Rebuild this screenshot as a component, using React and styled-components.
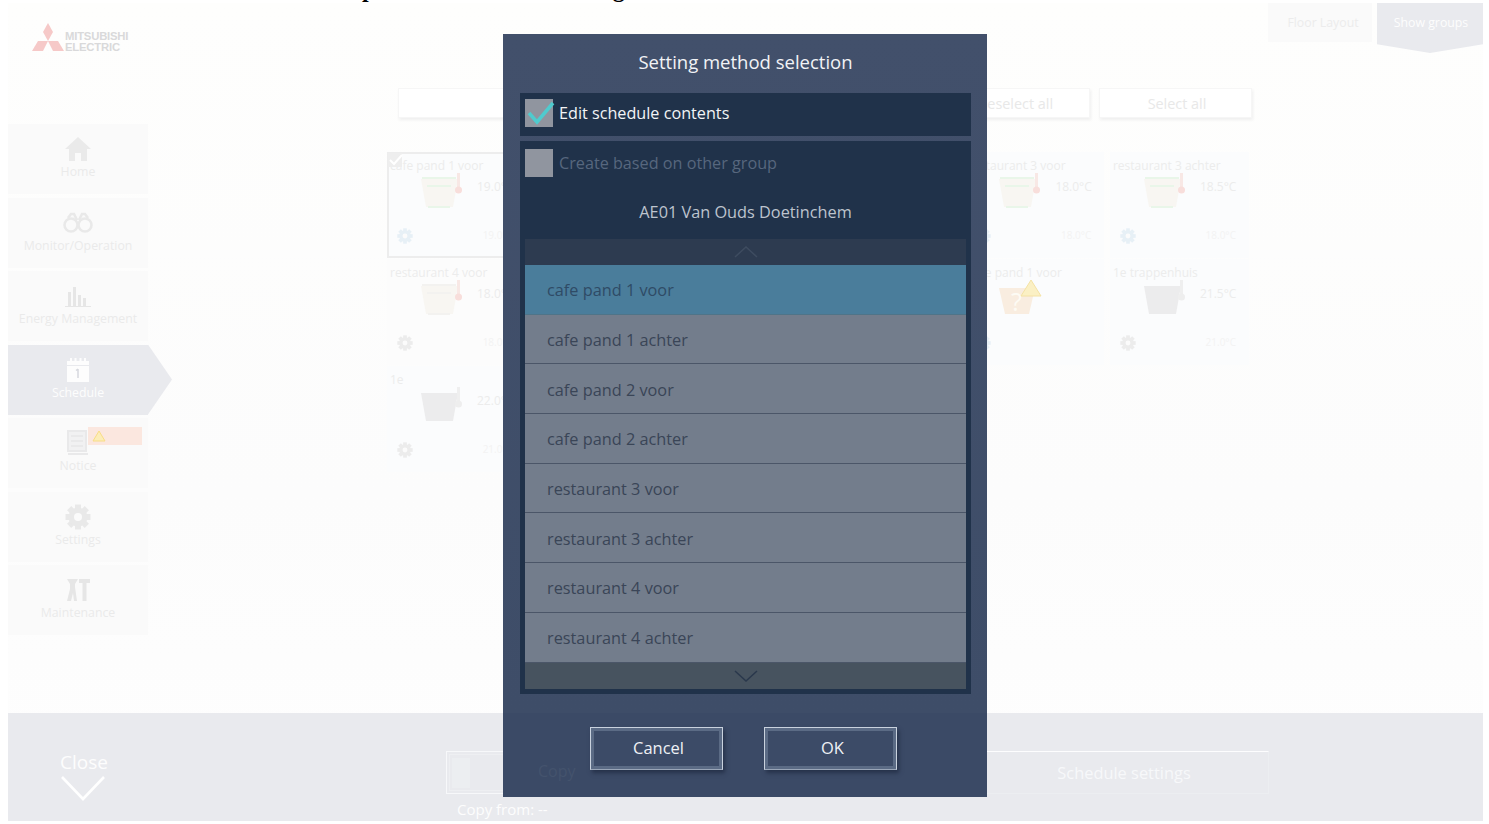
import React from "react";
import styled, { createGlobalStyle } from "styled-components";

const Global = createGlobalStyle`
  html, body { margin: 0; padding: 0; background: #fff; }
  body { font-family: "Open Sans", "Liberation Sans", sans-serif; overflow: hidden; }
`;

const Screen = styled.div`
  position: relative;
  width: 1489px;
  height: 824px;
  overflow: hidden;
  background: #fff;
`;
const Heading = styled.h2`
  margin: -25px 0 0 302px;
  height: 28px;
  font: bold 24px/28px "Liberation Serif", serif;
  color: #000;
  white-space: nowrap;
`;
const Frame = styled.div`
  display: flex;
  flex-direction: column;
  width: 1475px;
  height: 818px;
  margin-left: 8px;
  background: linear-gradient(#fefefd, #fcfcfc 60%, #fefefe);
`;
const Header = styled.header`
  display: flex;
  justify-content: space-between;
  height: 85px;
  flex: none;
`;
const Logo = styled.div`
  display: flex;
  align-items: flex-start;
  gap: 1px;
  padding: 20px 0 0 24px;
`;
const LogoText = styled.div`
  font: bold 11.3px/10.5px "Liberation Sans", sans-serif;
  color: #d9d9da;
  padding-top: 8px;
  letter-spacing: -0.2px;
`;
const Tabs = styled.div`
  display: flex;
  gap: 5px;
`;
const Tab = styled.div`
  position: relative;
  width: ${(p) => (p.$active ? "106px" : "104px")};
  height: 39px;
  display: flex;
  align-items: center;
  justify-content: center;
  box-sizing: border-box;
  padding-left: ${(p) => (p.$active ? "2px" : "6px")};
  font-size: 12.3px;
  color: ${(p) => (p.$active ? "#fdfdfd" : "#ececec")};
  background: ${(p) => (p.$active ? "#e9eaee" : "#fafafa")};
  ${(p) =>
    p.$active &&
    `&::after {
      content: "";
      position: absolute;
      left: 0; right: 0; top: 39px;
      height: 11px;
      background: #e9eaee;
      clip-path: polygon(0 0, 100% 0, 100% 20%, 50% 100%, 0 20%);
    }`}
`;
const Body = styled.div`
  flex: 1;
  display: flex;
  min-height: 0;
`;
const Sidebar = styled.nav`
  width: 164px;
  flex: none;
  display: flex;
  flex-direction: column;
  gap: 3.5px;
  padding-top: 36px;
`;
const NavItem = styled.div`
  position: relative;
  width: 140px;
  height: 70px;
  display: flex;
  flex-direction: column;
  align-items: center;
  justify-content: flex-start;
  padding-top: 10px;
  box-sizing: border-box;
  font-size: 12.3px;
  line-height: 16px;
  color: ${(p) => (p.$active ? "#fdfdfd" : "#eaeaea")};
  background: ${(p) => (p.$active ? "#e9eaee" : "#fafafa")};
  ${(p) =>
    p.$active &&
    `&::after {
      content: "";
      position: absolute;
      left: 140px; top: 0;
      width: 24px; height: 70px;
      background: #e9eaee;
      clip-path: polygon(0 0, 100% 50%, 0 100%);
    }`}
`;
const NavIcon = styled.span`
  height: 30px;
  display: flex;
  align-items: center;
`;
const NavBadge = styled.div`
  position: absolute;
  left: 80px;
  top: 9px;
  width: 54px;
  height: 18px;
  display: flex;
  align-items: center;
  padding-left: 4px;
  box-sizing: border-box;
  background: #fbe7df;
`;
const Main = styled.main`
  flex: 1;
  min-width: 0;
  padding-left: 215px;
`;
const Toolbar = styled.div`
  display: flex;
  justify-content: flex-end;
  gap: 9px;
  width: 854px;
  margin-left: 11px;
  height: 30px;
`;
const ToolButton = styled.div`
  flex: ${(p) => (p.$wide ? "1" : "none")};
  width: ${(p) => (p.$wide ? "auto" : "153px")};
  height: 30px;
  display: flex;
  align-items: center;
  justify-content: center;
  padding-left: 3px;
  font-size: 14.4px;
  color: #e8e8e8;
  background: #fff;
  border: 1px solid #f6f6f6;
  box-sizing: border-box;
  box-shadow: 1px 2px 3px #efefef;
`;
const Grid = styled.div`
  display: grid;
  grid-template-columns: repeat(6, 139px);
  column-gap: 5.6px;
  grid-auto-rows: 107px;
  margin-top: 34px;
`;
const Card = styled.div`
  position: relative;
  display: flex;
  flex-direction: column;
  box-sizing: border-box;
  padding: 4px 3px 0 1px;
  font-size: 12px;
  line-height: 15px;
  color: #ececec;
  background: ${(p) => (p.$plain ? "#fcfcfc" : "#fbfcfd")};
  border: 2px solid ${(p) => (p.$selected ? "#ededed" : "transparent")};
  height: 106px;
`;
const CardCheck = styled.svg`
  position: absolute;
  left: -1px;
  top: -1px;
`;
const CardStatus = styled.div`
  display: flex;
  align-items: flex-start;
  padding-left: 30px;
  gap: 11px;
  height: 45px;
  font-size: 12px;
`;
const Temp = styled.span`
  padding-top: 6px;
`;
const CardFoot = styled.div`
  display: flex;
  justify-content: space-between;
  padding: 10px 8px 0 7px;
  color: #f3f3f3;
  font-size: 10px;
`;
const BottomBar = styled.footer`
  position: relative;
  flex: none;
  height: 108px;
  background: #e9eaee;
  display: flex;
  color: #fdfdfd;
`;
const CloseBlock = styled.div`
  width: 438px;
  flex: none;
  display: flex;
  flex-direction: column;
  align-items: flex-start;
  padding: 36px 0 0 52px;
  box-sizing: border-box;
  font-size: 19px;
  line-height: 26px;
`;
const CopyBlock = styled.div`
  width: 527px;
  flex: none;
  padding-top: 38px;
  box-sizing: border-box;
`;
const CopyButton = styled.div`
  height: 43px;
  display: flex;
  align-items: center;
  padding-left: 5px;
  box-sizing: border-box;
  border: 1px solid #f7f8fa;
  outline: 1px solid #eeeff2;
  outline-offset: -4px;
`;
const CopySwatch = styled.span`
  width: 18px;
  height: 30px;
  background: #eceef1;
`;
const CopyFrom = styled.div`
  padding: 6px 0 0 11px;
  font-size: 15px;
  line-height: 18px;
`;
const SettingsButton = styled.div`
  width: 296px;
  height: 43px;
  margin-top: 38px;
  display: flex;
  align-items: center;
  justify-content: center;
  padding-left: 6px;
  box-sizing: border-box;
  border: 1px solid #eceef1;
  border-top-color: #fdfdfe;
  font-size: 16.4px;
  color: #f7f8fa;
`;

const Modal = styled.section`
  position: absolute;
  left: 503px;
  top: 34px;
  width: 484px;
  height: 763px;
  box-sizing: border-box;
  display: flex;
  flex-direction: column;
  padding: 0 16px 0 17px;
  background: linear-gradient(#42506b 0, #3e4d68 679px, #3b4a66 679px);
`;
const ModalTitle = styled.h1`
  margin: 0 0 4px;
  height: 55px;
  flex: none;
  display: flex;
  align-items: center;
  justify-content: center;
  font-size: 18.5px;
  font-weight: 400;
  color: #f1f3f6;
`;
const EditRow = styled.label`
  flex: none;
  height: 43px;
  display: flex;
  align-items: center;
  gap: 6px;
  padding: 0 0 3px 5px;
  box-sizing: border-box;
  background: #20324a;
  font-size: 16.2px;
  color: #f2f4f6;
`;
const Box = styled.span`
  position: relative;
  width: 28px;
  height: 28px;
  flex: none;
  background: #90959f;
`;
const BoxCheck = styled.svg`
  position: absolute;
  left: 2px;
  top: 2px;
  overflow: visible;
`;
const GroupPanel = styled.div`
  flex: none;
  margin-top: 5px;
  height: 553px;
  display: flex;
  flex-direction: column;
  padding: 0 5px 5px;
  box-sizing: border-box;
  background: #20324a;
`;
const CreateRow = styled.label`
  flex: none;
  height: 43px;
  display: flex;
  align-items: center;
  gap: 6px;
  font-size: 16.2px;
  color: #57677e;
`;
const SiteName = styled.div`
  flex: none;
  height: 55px;
  display: flex;
  align-items: center;
  justify-content: center;
  font-size: 16.3px;
  color: #bdc4ce;
`;
const Scroller = styled.div`
  flex: none;
  height: 26px;
  display: flex;
  align-items: center;
  justify-content: center;
  background: ${(p) => (p.$down ? "#47535f" : "#2d3b50")};
`;
const ListItem = styled.div`
  flex: none;
  height: 49.7px;
  box-sizing: border-box;
  display: flex;
  align-items: center;
  padding: 2px 0 0 22px;
  font-size: 16.3px;
  color: ${(p) => (p.$active ? "#2f4b66" : "#3a4557")};
  background: ${(p) => (p.$active ? "#4a7d9b" : "#737d8c")};
  border-bottom: 1px solid ${(p) => (p.$active ? "#4f7488" : "#4b5668")};
  &:last-of-type { border-bottom: 0; }
`;
const Actions = styled.div`
  flex: 1;
  display: flex;
  justify-content: center;
  gap: 41px;
  padding: 33px 4px 0 0;
`;
const ActionButton = styled.button`
  width: 133px;
  height: 43px;
  padding: 0 0 2px 4px;
  font-family: inherit;
  font-size: 16.5px;
  color: #eef1f5;
  background: #3c4b67;
  border: 1px solid #c9d2de;
  border-bottom-color: #9aa6b8;
  box-shadow: inset 0 0 0 3px #5b6b85, 2px 3px 4px #26324a;
`;
const GhostLabel = styled.span`
  position: absolute;
  left: 35px;
  top: 726px;
  font-size: 16px;
  color: #44536d;
`;

const Home = () => (
  <svg width="28" height="26" viewBox="0 0 28 26"><path d="M14 1 1 13h4v12h6v-8h6v8h6V13h4z" fill="#eaeaea" /></svg>
);
const Binoculars = () => (
  <svg width="30" height="22" viewBox="0 0 30 22" fill="none" stroke="#e9e9e9" strokeWidth="2.6">
    <circle cx="8" cy="13" r="6.500" /><circle cx="22" cy="13" r="6.500" />
    <path d="M5 6 8 2h3l3 6M25 6l-3-4h-3l-3 6" />
  </svg>
);
const Bars = () => (
  <svg width="28" height="24" viewBox="0 0 28 24" fill="#e6e6e6">
    <rect x="4" y="8" width="3" height="14" /><rect x="9" y="3" width="3" height="19" />
    <rect x="14" y="11" width="3" height="11" /><rect x="19" y="14" width="3" height="8" />
    <rect x="1" y="22" width="26" height="1" />
  </svg>
);
const Calendar = () => (
  <svg width="24" height="26" viewBox="0 0 24 26">
    <path d="M1 4h22v21H1z" fill="#fdfdfd" />
    <path d="M1 8.500h22" stroke="#e9eaee" strokeWidth="1" />
    <path d="M5 1v4M9.500 1v4M14.500 1v4M19 1v4" stroke="#fdfdfd" strokeWidth="2" />
    <path d="M12 12v9M10 13.500l2-1.500" stroke="#d6d8de" strokeWidth="1.500" fill="none" />
  </svg>
);
const NoticeIcon = () => (
  <svg width="24" height="26" viewBox="0 0 24 26" fill="none" stroke="#e9e9ea" strokeWidth="2">
    <path d="M2 1h18v20H2z" fill="#f1f1f2" /><path d="M5 6h12M5 11h12M5 16h12M2 24h20" />
  </svg>
);
const Gear = ({ size = 26, color = "#e9e9e9" }) => (
  <svg width={size} height={size} viewBox="0 0 26 26">
    <g fill={color}>
      {[0, 45, 90, 135].map((a) => (
        <rect key={a} x="10" y="0.500" width="6" height="25" transform={`rotate(${a} 13 13)`} />
      ))}
      <circle cx="13" cy="13" r="9.500" />
    </g>
    <circle cx="13" cy="13" r="4" fill="#fbfbfb" />
  </svg>
);
const Tools = () => (
  <svg width="26" height="26" viewBox="0 0 26 26" fill="#e6e6e6">
    <path d="M2 2h11l-3 5v3l2 14H9l-1-8-2 8H2l3-12V7z" />
    <path d="M14 2h11v4h-3.500v18h-4V6H14z" />
  </svg>
);
const DropMark = () => (
  <svg width="14" height="12" viewBox="0 0 14 12"><path d="M7 1 13 11H1z" fill="#fcedb8" stroke="#f9dd86" /></svg>
);

const Unit = ({ kind }) => {
  if (kind === "warn") {
    return (
      <svg width="46" height="40" viewBox="0 0 46 40">
        <path d="M1 8h36l-6 26H7z" fill="#f9ede0" />
        <text x="13" y="31" fontSize="25" fill="#fdfbf4" fontFamily="Open Sans">?</text>
        <path d="M33 0 43 16H23z" fill="#fbf0c4" stroke="#f4e2a4" />
      </svg>
    );
  }
  const off = kind === "off";
  return (
    <svg width="46" height="36" viewBox="0 0 46 36">
      <path d="M1 6h37l-5 28H6z" fill={off ? "#ececed" : "#f8f6f2"} />
      {!off && <path d="M2 5h34M7 13h24M8 34h22" stroke={kind === "idle" ? "#f3f2f0" : "#e9f6e9"} strokeWidth="2" />}
      <rect x="37" y="0" width="3" height="17" fill={off ? "#efefef" : "#f8e8e5"} />
      <circle cx="38.500" cy="17" r="3.500" fill={off ? "#eeeeee" : "#f8dedb"} />
    </svg>
  );
};

const groups = [
  { name: "cafe pand 1 voor", temp: "19.0°C", set: "19.0°C", selected: true },
  { name: "cafe pand 1 achter", temp: "19.0°C", set: "19.0°C" },
  { name: "cafe pand 2 voor", temp: "18.5°C", set: "18.0°C" },
  { name: "cafe pand 2 achter", temp: "18.5°C", set: "18.0°C" },
  { name: "restaurant 3 voor", temp: "18.0°C", set: "18.0°C" },
  { name: "restaurant 3 achter", temp: "18.5°C", set: "18.0°C" },
  { name: "restaurant 4 voor", temp: "18.0°C", set: "18.0°C", kind: "idle" },
  { name: "restaurant 4 achter", temp: "18.0°C", set: "18.0°C", kind: "idle" },
  { name: "keuken", temp: "18.0°C", set: "18.0°C", kind: "idle" },
  { name: "toiletten", temp: "18.0°C", set: "18.0°C", kind: "idle" },
  { name: "cafe pand 1 voor", temp: "", set: "", kind: "warn" },
  { name: "1e trappenhuis", temp: "21.5°C", set: "21.0°C", kind: "off" },
  { name: "1e", temp: "22.0°C", set: "21.0°C", kind: "off" },
];

const navItems = [
  { label: "Home", icon: <Home /> },
  { label: "Monitor/Operation", icon: <Binoculars /> },
  { label: "Energy Management", icon: <Bars /> },
  { label: "Schedule", icon: <Calendar />, active: true },
  { label: "Notice", icon: <NoticeIcon />, badge: true },
  { label: "Settings", icon: <Gear /> },
  { label: "Maintenance", icon: <Tools /> },
];

const names = [
  "cafe pand 1 voor",
  "cafe pand 1 achter",
  "cafe pand 2 voor",
  "cafe pand 2 achter",
  "restaurant 3 voor",
  "restaurant 3 achter",
  "restaurant 4 voor",
  "restaurant 4 achter",
];

export default function App() {
  return (
    <Screen>
      <Global />
      <Heading>Example of the schedule setting</Heading>
      <Frame>
        <Header>
          <Logo>
            <svg width="32" height="28" viewBox="0 0 32 28" fill="#f6c9c8">
              <path d="M16 0 21 9 16 18 11 9z" />
              <path d="M16 18H26L32 28H21z" />
              <path d="M16 18H6L0 28H11z" />
            </svg>
            <LogoText>MITSUBISHI<br />ELECTRIC</LogoText>
          </Logo>
          <Tabs>
            <Tab>Floor Layout</Tab>
            <Tab $active>Show groups</Tab>
          </Tabs>
        </Header>
        <Body>
          <Sidebar>
            {navItems.map((n) => (
              <NavItem key={n.label} $active={n.active}>
                <NavIcon>{n.icon}</NavIcon>
                {n.label}
                {n.badge && (
                  <NavBadge><DropMark /></NavBadge>
                )}
              </NavItem>
            ))}
          </Sidebar>
          <Main>
            <Toolbar>
              <ToolButton $wide />
              <ToolButton>Deselect all</ToolButton>
              <ToolButton>Select all</ToolButton>
            </Toolbar>
            <Grid>
              {groups.map((g, i) => (
                <Card key={i} $selected={g.selected} $plain={g.kind === "idle"}>
                  {g.selected && (
                    <CardCheck width="16" height="16" viewBox="0 0 16 16">
                      <rect width="14" height="14" fill="#eeeeee" />
                      <path d="M2 7l4 4 8-9" fill="none" stroke="#fff" strokeWidth="2" />
                    </CardCheck>
                  )}
                  {g.name}
                  <CardStatus>
                    <Unit kind={g.kind} />
                    <Temp>{g.temp}</Temp>
                  </CardStatus>
                  <CardFoot>
                    <Gear size={16} color={g.kind === "idle" || g.kind === "off" ? "#ececec" : "#e7f0f6"} />
                    <span>{g.set}</span>
                  </CardFoot>
                </Card>
              ))}
            </Grid>
          </Main>
        </Body>
        <BottomBar>
          <CloseBlock>
            Close
            <svg width="46" height="26" viewBox="0 0 46 26" fill="none" stroke="#fff" strokeWidth="2.600">
              <path d="M2 2 23 24 44 2" />
            </svg>
          </CloseBlock>
          <CopyBlock>
            <CopyButton>
              <CopySwatch />
            </CopyButton>
            <CopyFrom>Copy from: --</CopyFrom>
          </CopyBlock>
          <SettingsButton>Schedule settings</SettingsButton>
        </BottomBar>
      </Frame>
      <Modal>
        <GhostLabel>Copy</GhostLabel>
        <ModalTitle>Setting method selection</ModalTitle>
        <EditRow>
          <Box>
            <BoxCheck width="30" height="24" viewBox="0 0 30 24" fill="none" stroke="#4fcbce" strokeWidth="3.500">
              <path d="M2 12 10 21 26 2" />
            </BoxCheck>
          </Box>
          Edit schedule contents
        </EditRow>
        <GroupPanel>
          <CreateRow>
            <Box />
            Create based on other group
          </CreateRow>
          <SiteName>AE01 Van Ouds Doetinchem</SiteName>
          <Scroller>
            <svg width="24" height="12" viewBox="0 0 24 12" fill="none" stroke="#3e4c60" strokeWidth="1.500">
              <path d="M1 11 12 1l11 10" />
            </svg>
          </Scroller>
          {names.map((n, i) => (
            <ListItem key={n} $active={i === 0}>{n}</ListItem>
          ))}
          <Scroller $down>
            <svg width="24" height="12" viewBox="0 0 24 12" fill="none" stroke="#2a384c" strokeWidth="1.500">
              <path d="M1 1l11 10L23 1" />
            </svg>
          </Scroller>
        </GroupPanel>
        <Actions>
          <ActionButton>Cancel</ActionButton>
          <ActionButton>OK</ActionButton>
        </Actions>
      </Modal>
    </Screen>
  );
}
